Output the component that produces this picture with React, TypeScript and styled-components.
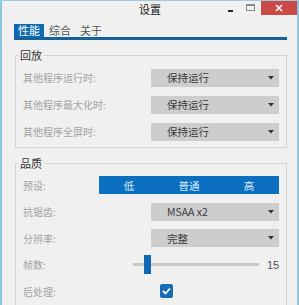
import React from 'react'
import styled, { createGlobalStyle } from 'styled-components'

const GlobalStyle = createGlobalStyle`
  html, body {
    margin: 0;
    padding: 0;
    background: #f0f0f0;
  }
  body {
    font-family: "Noto Sans CJK SC", "Noto Sans", "Liberation Sans", sans-serif;
    font-size: 12px;
  }
`

const Window = styled.div`
  box-sizing: border-box;
  width: 299px;
  height: 305px;
  overflow: hidden;
  background: #f0f0f0;
  border-left: 2px solid #8ec6de;
  border-right: 2px solid #8ec6de;
  border-top: 1px solid #9ccbe0;
`

const TitleBar = styled.div`
  display: grid;
  grid-template-columns: 1fr auto 1fr;
  align-items: start;
  height: 21px;
`

const Title = styled.div`
  grid-column: 2;
  color: #222;
  font-size: 11px;
  line-height: 17px;
  margin-left: 1px;
`

const Controls = styled.div`
  grid-column: 3;
  justify-self: end;
  display: flex;
  align-items: flex-start;
`

const ControlButton = styled.div<{ $w: number; $close?: boolean }>`
  display: flex;
  align-items: center;
  justify-content: center;
  width: ${(p) => p.$w}px;
  height: 15px;
  margin-top: -1px;
  background: ${(p) => (p.$close ? '#c94a46' : 'transparent')};
`

const MinIcon = styled.div`
  width: 5px;
  height: 2px;
  background: #222;
  margin-top: 7px;
`

const MaxIcon = styled.div`
  box-sizing: border-box;
  width: 9px;
  height: 7px;
  border: 1px solid #888;
  border-top-width: 2px;
  margin-top: -1px;
`

const Tabs = styled.div`
  display: flex;
  gap: 1px;
  margin: 2px 10px 0 12px;
  border-bottom: 3px solid #17609a;
`

const Tab = styled.div<{ $active?: boolean }>`
  padding: 0 4px;
  height: 13px;
  line-height: 13px;
  font-size: 11px;
  color: ${(p) => (p.$active ? '#fff' : '#555')};
  background: ${(p) => (p.$active ? '#0d6ab2' : 'transparent')};
`

const Group = styled.fieldset<{ $top: number; $pad: number }>`
  margin: ${(p) => p.$top}px 10px 0 13px;
  padding: ${(p) => p.$pad}px 7px 2px 7px;
  border: 1px solid #d4d4d4;
  min-width: 0;
`

const Legend = styled.legend`
  margin-left: -5px;
  padding: 0 2px;
  color: #333;
  font-size: 11px;
  line-height: 14px;
`

const Row = styled.div<{ $label?: number; $h?: number }>`
  display: grid;
  grid-template-columns: ${(p) => p.$label ?? 128}px 1fr;
  align-items: center;
  height: ${(p) => p.$h ?? 27}px;
`

const Label = styled.div`
  color: #a3a3a3;
  font-size: 10px;
  white-space: nowrap;
`

const Select = styled.div`
  display: flex;
  align-items: center;
  justify-content: space-between;
  height: 18px;
  padding: 0 5px 0 16px;
  background: #cdcdcd;
  color: #3a3a3a;
  font-size: 10.5px;
`

const Segments = styled.div`
  display: grid;
  grid-template-columns: repeat(3, 1fr);
  height: 18px;
  background: #0d6fc0;
`

const Segment = styled.div`
  display: flex;
  align-items: center;
  justify-content: center;
  color: #d8ecff;
  font-size: 10.5px;
`

const SliderWrap = styled.div`
  display: flex;
  align-items: center;
  gap: 8px;
`

const Track = styled.div`
  position: relative;
  flex: 1;
  height: 3px;
  background: #c9c9c9;
`

const Thumb = styled.div`
  position: absolute;
  top: -8px;
  width: 7px;
  height: 19px;
  background: #0f67b1;
`

const Value = styled.div`
  width: 12px;
  color: #555;
  font-family: "Liberation Sans", sans-serif;
  font-size: 11px;
`

const Check = styled.div`
  display: flex;
  align-items: center;
  justify-content: center;
  width: 13px;
  height: 14px;
  margin-left: 9px;
  border-radius: 2px;
  background: #166db8;
`

const Arrow = () => (
  <svg width="6" height="4" viewBox="0 0 6 4">
    <path d="M0 0 H6 L3 3.5 Z" fill="#333" />
  </svg>
)

const Dropdown = ({ value }: { value: string }) => (
  <Select>
    <span>{value}</span>
    <Arrow />
  </Select>
)

export default function App() {
  const fps = 15
  return (
    <>
      <GlobalStyle />
      <Window>
        <TitleBar>
          <Title>设置</Title>
          <Controls>
            <ControlButton $w={20}><MinIcon /></ControlButton>
            <ControlButton $w={21}><MaxIcon /></ControlButton>
            <ControlButton $w={36} $close>
              <svg width="8" height="8" viewBox="0 0 8 8">
                <path d="M1 1 L7 7 M7 1 L1 7" stroke="#fff" strokeWidth="1.6" />
              </svg>
            </ControlButton>
          </Controls>
        </TitleBar>

        <Tabs>
          <Tab $active>性能</Tab>
          <Tab>综合</Tab>
          <Tab>关于</Tab>
        </Tabs>

        <Group $top={8} $pad={2}>
          <Legend>回放</Legend>
          <Row>
            <Label>其他程序运行时:</Label>
            <Dropdown value="保持运行" />
          </Row>
          <Row>
            <Label>其他程序最大化时:</Label>
            <Dropdown value="保持运行" />
          </Row>
          <Row>
            <Label>其他程序全屏时:</Label>
            <Dropdown value="保持运行" />
          </Row>
        </Group>

        <Group $top={8} $pad={2}>
          <Legend>品质</Legend>
          <Row $label={76} $h={26.5}>
            <Label>预设:</Label>
            <Segments>
              <Segment>低</Segment>
              <Segment>普通</Segment>
              <Segment>高</Segment>
            </Segments>
          </Row>
          <Row $h={26.5}>
            <Label>抗锯齿:</Label>
            <Dropdown value="MSAA x2" />
          </Row>
          <Row $h={26.5}>
            <Label>分辨率:</Label>
            <Dropdown value="完整" />
          </Row>
          <Row $label={110} $h={26.5}>
            <Label>帧数:</Label>
            <SliderWrap>
              <Track>
                <Thumb style={{ left: `${(fps / 120) * 100 - 3.5}%` }} />
              </Track>
              <Value>{fps}</Value>
            </SliderWrap>
          </Row>
          <Row $h={26.5}>
            <Label>后处理:</Label>
            <Check>
              <svg width="9" height="8" viewBox="0 0 9 8">
                <path d="M1 4 L3.5 6.5 L8 1.5" stroke="#fff" strokeWidth="1.8" fill="none" />
              </svg>
            </Check>
          </Row>
        </Group>
      </Window>
    </>
  )
}
